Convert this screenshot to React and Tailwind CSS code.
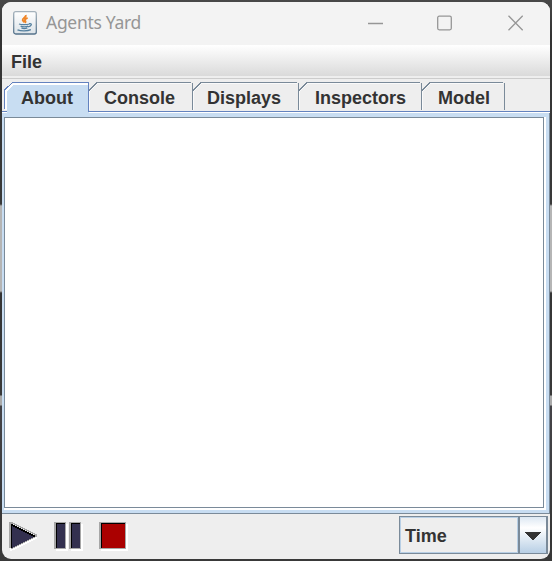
const tabs = [
  { label: "About", width: "w-[84px]", pad: "pl-[17px]", w: 84, active: true },
  { label: "Console", width: "w-[104px]", pad: "pl-4", w: 104 },
  { label: "Displays", width: "w-[106px]", pad: "pl-[15px]", w: 106 },
  { label: "Inspectors", width: "w-[123px]", pad: "pl-[17px]", w: 123 },
  { label: "Model", width: "w-[83px]", pad: "pl-[17px]", w: 83 },
];

function JavaIcon() {
  return (
    <svg className="-mt-px ml-[11px] h-6 w-6 shrink-0" viewBox="0 0 24 24" fill="none">
      <defs>
        <linearGradient id="java-bg" x1="0" y1="0" x2="0" y2="1">
          <stop stopColor="#ffffff" />
          <stop offset="1" stopColor="#dce3e8" />
        </linearGradient>
        <linearGradient id="java-edge" x1="0" y1="0" x2="0" y2="1">
          <stop stopColor="#a5b2bc" />
          <stop offset="1" stopColor="#54728b" />
        </linearGradient>
      </defs>
      <rect x="0.7" y="0.7" width="22.6" height="22.3" rx="2" fill="url(#java-bg)" stroke="url(#java-edge)" strokeWidth="1.3" />
      <path d="M12.8 4c.8 2.3-3.5 3-3.1 5 .2 1 1.4 1.6 1.8 2.5M14.6 6.8c-2.9 1.2-3.2 2-2.2 3.2.5.7.2 1.2-.4 1.8" stroke="#ef8527" strokeWidth="1.9" />
      <path d="M6 13c2.3 1 8 .8 10.5 0M7.6 15.1c2 .9 5.8.8 7.6 0M8.4 17c1.7.7 4.4.6 6 0M4.5 18.8c3.6 1.5 10 1.4 13.4-.2M16 12.7c3.6-.7 2.8 2.4-.8 3.1" stroke="#55809f" strokeWidth="1.3" />
    </svg>
  );
}

function Tab({ label, width, pad, w, active }) {
  return (
    <div className={`relative h-[31px] shrink-0 pt-[6px] text-[18px] leading-[22px] font-bold ${width} ${pad}`}>
      <svg className="absolute left-0 top-0 overflow-visible" width={w} height="31" fill="none" shapeRendering="crispEdges">
        {active ? (
          <>
            <path d={`M3 31V10L10 2H${w}V31Z`} fill="#c8ddf2" />
            <path d={`M2 29V10L10 2.5H${w}`} stroke="#fff" strokeWidth="2" />
            <path d={`M.5 28V9L8.5 1.5H${w + 0.5}V30`} stroke="#6382bf" />
          </>
        ) : (
          <>
            <path d={`M1 9.5L9 1.5H${w - 1}`} stroke="#7a8a99" />
            <path d={`M${w + 0.5} 2V29`} stroke="#7a8a99" />
            <path d={`M1.5 29V10.5L9.5 2.5H${w - 1}`} stroke="#fafafa" />
          </>
        )}
      </svg>
      <span className="relative">{label}</span>
    </div>
  );
}

// Stair-stepped play arrow: each edge moves two pixels across for one down.
const steps = Array.from({ length: 12 }, (_, i) => i);

function PlayArrow() {
  return (
    <g transform="translate(0 -1)">
      <path d="M2 28H4V31H2Z" fill="#fff" />
      <path d="M1 2H5V4H3V28H1Z" fill="#a7a7a7" />
      {steps.map((i) => (
        <g key={i}>
          <rect x={3 + i * 2} y={28 - i} width="4" height="2" fill="#fff" />
          <rect x={3 + i * 2} y={28 - i} width="2" height="1" fill="#a7a7a7" />
          <rect x={4 + i * 2} y={3 + i} width="3" height="1" fill="#a7a7a7" />
          <rect x={3 + i * 2} y={4 + i} width="2" height={24 - i * 2} fill="#33304f" />
          <rect x={3 + i * 2} y={4 + i} width="2" height="2" fill="#000" />
        </g>
      ))}
      <rect x="27" y="15" width="2" height="2" fill="#a7a7a7" />
      <rect x="3" y="4" width="1" height="24" fill="#000" />
    </g>
  );
}

export default function App() {
  return (
    <div className="h-[561px] w-[552px] overflow-hidden bg-[linear-gradient(#484848_0px,#333_36px,#393939_204px,#b5b5b5_206px,#b5b5b5_291px,#353535_293px,#393939_395px,#aaa_396px,#aaa_405px,#454448_406px,#353535_540px,#393939_561px)] p-[2px] font-['Liberation_Sans',Arial,sans-serif] text-[#333]">
      <div className="flex h-[557px] w-[548px] flex-col overflow-hidden rounded-[9px] bg-[#eeeeee]">
        <div className="flex h-[43px] shrink-0 items-center bg-[#f3f3f3]">
          <JavaIcon />
          <span className="-mt-[3px] ml-[9px] font-['Noto_Sans',sans-serif] text-[17.5px] leading-6 tracking-[-0.3px] text-[#969696]">Agents Yard</span>
          <svg className="ml-auto mr-[26px] mt-[-2px]" width="156" height="16" fill="none" stroke="#969696" strokeWidth="1.3">
            <path d="M0 8.5H15" />
            <rect x="69.7" y="1.2" width="13.6" height="13.6" rx="1.5" />
            <path d="M140.5 .8L154.7 15.2M154.7 .8L140.5 15.2" />
          </svg>
        </div>
        <div className="flex h-[31px] shrink-0 items-center bg-linear-to-b from-white to-[#dadada] pl-[9px] pt-[3px] text-[18px] leading-[21px] font-bold">File</div>
        <div className="mt-[2px] h-px shrink-0 bg-[#cccccc]" />
        <div className="mt-[2px] flex h-[30px] shrink-0 pl-[2px]">
          {tabs.map((tab) => (
            <Tab key={tab.label} {...tab} />
          ))}
        </div>
        <div className="flex h-px shrink-0">
          <div className="w-[5px] bg-[#6382bf]" />
          <div className="w-[81px] bg-[#c8ddf2]" />
          <div className="flex-1 bg-[#6382bf]" />
        </div>
        <div className="flex h-px shrink-0 bg-white">
          <div className="ml-[5px] w-[82px] bg-[#c8ddf2]" />
        </div>
        <div className="h-[401px] shrink-0 border-r border-b border-[#7a8a99] bg-[#c8ddf2] pl-[2px] pr-[3px] pt-1 pb-[3px]">
          <div className="h-full border-b-2 border-r-2 border-white">
            <div className="h-full border border-[#7a8a99] bg-white" />
          </div>
        </div>
        <div className="flex h-[45px] shrink-0 justify-between">
          <svg className="ml-[6px] mt-[7px]" width="122" height="33" fill="none" shapeRendering="crispEdges">
            <PlayArrow />
            <path d="M48 3H60V30H48ZM63 3H75V30H63ZM93 3H120V30H93Z" fill="#fff" />
            <path d="M46 1H58V3H48V28H46ZM61 1H73V3H63V28H61ZM91 1H118V3H93V28H91Z" fill="#a7a7a7" />
            <path d="M48 3H57V27H48ZM63 3H72V27H63Z" fill="#33304f" />
            <path d="M93 3H117V27H93Z" fill="#aa0000" />
            <path d="M48.5 27V2.5H57M63.5 27V2.5H72M93.5 27V2.5H117" stroke="#000" />
            <path d="M57 2H58V28H48V27H57ZM72 2H73V28H63V27H72ZM117 2H118V28H93V27H117Z" fill="#a7a7a7" />
          </svg>
          <div className="mr-[2px] mt-[2px] flex h-[38px] w-[149px] border border-[#7a8a99]">
            <div className="flex w-[118px] items-center border border-[#b8cfe5] pl-1 pt-[3px] text-[18px] leading-[21px] font-bold">Time</div>
            <div className="flex flex-1 items-center justify-center border-l-2 border-r border-[#7a8a99] bg-[linear-gradient(#dde8f3_0%,#fff_30%,#b8cfe5_100%)] pt-[3px]">
              <svg width="16" height="9" shapeRendering="crispEdges"><path d="M0 0H16L8 9Z" fill="#333" /></svg>
            </div>
          </div>
        </div>
      </div>
    </div>
  );
}
